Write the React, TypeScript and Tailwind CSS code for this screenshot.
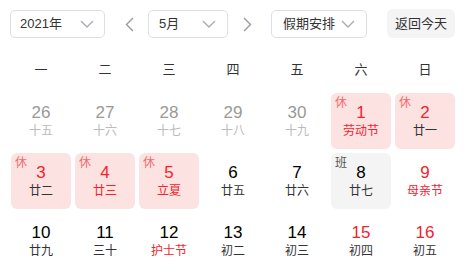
import React from "react"

type Day = {
  n: number
  lunar: string
  other?: boolean
  red?: boolean
  lunarRed?: boolean
  tag?: "休" | "班"
}

const weeks = ["一", "二", "三", "四", "五", "六", "日"]

const days: Day[] = [
  { n: 26, lunar: "十五", other: true },
  { n: 27, lunar: "十六", other: true },
  { n: 28, lunar: "十七", other: true },
  { n: 29, lunar: "十八", other: true },
  { n: 30, lunar: "十九", other: true },
  { n: 1, lunar: "劳动节", red: true, lunarRed: true, tag: "休" },
  { n: 2, lunar: "廿一", red: true, tag: "休" },
  { n: 3, lunar: "廿二", red: true, tag: "休" },
  { n: 4, lunar: "廿三", red: true, lunarRed: true, tag: "休" },
  { n: 5, lunar: "立夏", red: true, lunarRed: true, tag: "休" },
  { n: 6, lunar: "廿五" },
  { n: 7, lunar: "廿六" },
  { n: 8, lunar: "廿七", tag: "班" },
  { n: 9, lunar: "母亲节", red: true, lunarRed: true },
  { n: 10, lunar: "廿九" },
  { n: 11, lunar: "三十" },
  { n: 12, lunar: "护士节", lunarRed: true },
  { n: 13, lunar: "初二" },
  { n: 14, lunar: "初三" },
  { n: 15, lunar: "初四", red: true },
  { n: 16, lunar: "初五", red: true },
]

function Chevron() {
  return (
    <svg width="14" height="8" viewBox="0 0 14 8" fill="none">
      <path d="M1 1l6 6 6-6" stroke="#a8abb2" strokeWidth="1.4" />
    </svg>
  )
}

function Select({ label, className }: { label: string; className: string }) {
  return (
    <div className={`h-[28px] flex items-center justify-between rounded-[5px] border border-[#dcdfe6] text-[13px] text-[#333] ${className}`}>
      <span>{label}</span>
      <Chevron />
    </div>
  )
}

function Arrow({ dir }: { dir: "l" | "r" }) {
  return (
    <svg width="9" height="15" viewBox="0 0 9 15" fill="none">
      <path d={dir === "l" ? "M8 1L1.5 7.5 8 14" : "M1 1l6.5 6.5L1 14"} stroke="#9a9a9a" strokeWidth="1.4" />
    </svg>
  )
}

export default function App() {
  return (
    <div
      className="w-[472px] h-[265px] bg-white overflow-hidden"
      style={{ fontFamily: '"Liberation Sans", "Noto Sans CJK SC", sans-serif' }}
    >
      <div className="flex items-center pt-[10px] pl-[10px]">
        <Select label="2021年" className="w-[95px] pl-[9px] pr-[10px]" />
        <div className="ml-[20px] mr-[14px]">
          <Arrow dir="l" />
        </div>
        <Select label="5月" className="w-[80px] pl-[10px] pr-[11px]" />
        <div className="ml-[15px] mr-[19px]">
          <Arrow dir="r" />
        </div>
        <Select label="假期安排" className="w-[96px] pl-[11px] pr-[11px]" />
        <button className="ml-[20px] h-[29px] w-[68px] -mt-[1px] rounded-[6px] bg-[#f4f4f5] text-[13px] text-[#333]">
          返回今天
        </button>
      </div>

      <div className="grid grid-cols-[repeat(7,60px)] gap-x-[4px] ml-[11px] mt-[17px] h-[30px] items-center text-[13px] text-[#333]">
        {weeks.map((w) => (
          <div key={w} className="text-center">{w}</div>
        ))}
      </div>

      <div className="grid grid-cols-[repeat(7,60px)] gap-[4px] ml-[11px] mt-[8px]">
        {days.map((d, i) => {
          const bg = d.tag === "休" ? "bg-[#fde2e2]" : d.tag === "班" ? "bg-[#f4f4f5]" : ""
          const num = d.other ? "text-[#999]" : d.red ? "text-[#f5222d]" : "text-black"
          const lun = d.other ? "text-[#bbb]" : d.lunarRed ? "text-[#f5222d]" : "text-[#333]"
          return (
            <div key={i} className={`relative h-[56px] rounded-[6px] flex flex-col items-center pt-[9px] ${bg}`}>
              {d.tag && (
                <span
                  className={`absolute left-[4px] top-[2px] text-[12px] leading-[16px] ${
                    d.tag === "休" ? "text-[#f56c6c]" : "text-[#555]"
                  }`}
                >
                  {d.tag}
                </span>
              )}
              <span className={`text-[17px] leading-[21px] ${num}`}>{d.n}</span>
              <span className={`text-[12px] leading-[16px] ${lun}`}>{d.lunar}</span>
            </div>
          )
        })}
      </div>
    </div>
  )
}
